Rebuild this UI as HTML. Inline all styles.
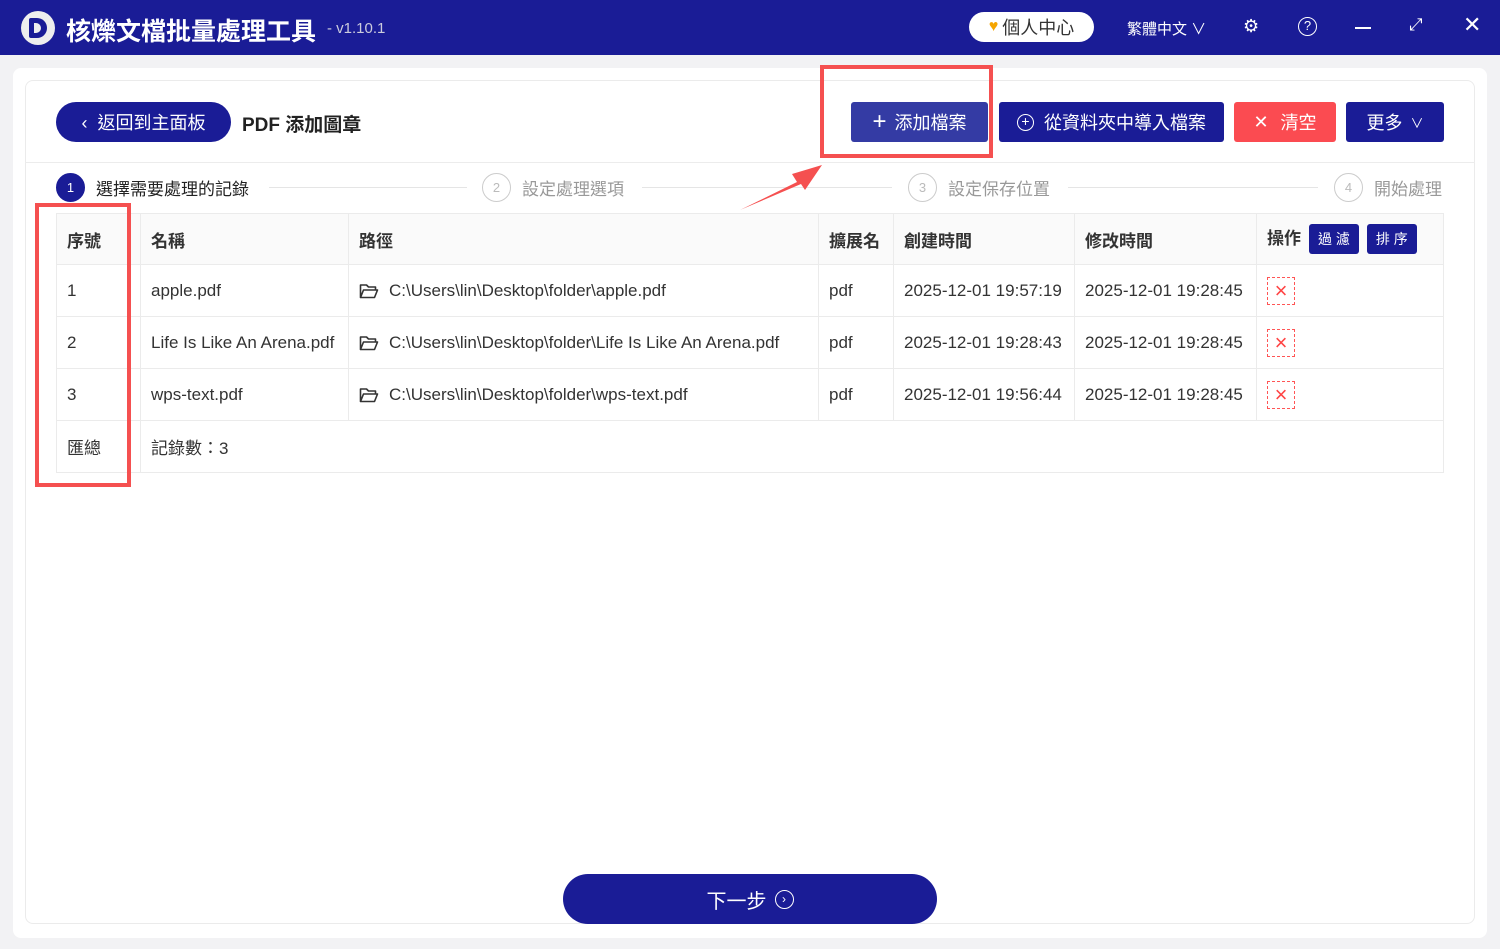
<!DOCTYPE html>
<html><head><meta charset="utf-8"><style>
*{box-sizing:border-box;margin:0;padding:0}
body{width:1500px;height:949px;overflow:hidden;background:#f2f2f4;font-family:"Liberation Sans","Noto Sans CJK TC",sans-serif;position:relative;color:#333}
.title{position:absolute;left:0;top:0;width:1500px;height:55px;background:#1a1c96;color:#fff}
.abs{position:absolute}
.card{position:absolute;left:25px;top:80px;width:1450px;height:844px;background:#fff;border:1px solid #ebebeb;border-radius:8px}
.btn{position:absolute;top:102px;height:40px;color:#fff;font-size:18px;display:flex;align-items:center;justify-content:center;border-radius:3px}
table{position:absolute;left:56px;top:213px;width:1388px;border-collapse:collapse;font-size:17px}
td{border:1px solid #ebebeb;padding:0 10px;height:52px;color:#333;vertical-align:middle}
tr.h td{background:#fafafa;font-weight:bold;height:51px}
.x{display:inline-block;width:28px;height:28px;border:1px dashed #f55;color:#f44;text-align:center;line-height:26px;font-size:22px;vertical-align:middle}
.step{position:absolute;top:173px;font-size:17px;color:#999;display:flex;align-items:center}
.c{width:29px;height:29px;border-radius:50%;border:1px solid #ccc;display:flex;align-items:center;justify-content:center;font-size:13px;margin-right:11px;color:#bbb}
.line{position:absolute;top:187px;height:1px;background:#e5e5e5}
.sm{display:inline-block;background:#1a1c96;color:#fff;font-size:14px;padding:0 9px;height:30px;line-height:30px;border-radius:3px;margin-left:8px;font-weight:normal;vertical-align:middle}
.f{vertical-align:-3px;margin-right:10px}
</style></head><body>
<div class="title">
 <div class="abs" style="left:21px;top:11px;width:34px;height:34px;border-radius:50%;background:#eee;display:flex;align-items:center;justify-content:center"><div style="width:18px;height:20px;background:#1a1c96;border-radius:2px 10px 10px 2px;position:relative"><div style="position:absolute;left:5px;top:5px;width:7px;height:10px;background:#eee;border-radius:0 5px 5px 0"></div></div></div>
 <div class="abs" style="left:66px;top:12px;font-size:25px;font-weight:bold">核爍文檔批量處理工具</div>
 <div class="abs" style="left:327px;top:20px;font-size:15px;color:#ccd">- v1.10.1</div>
 <div class="abs" style="left:969px;top:12px;width:125px;height:30px;background:#fff;border-radius:15px;color:#333;font-size:18px;display:flex;align-items:center;justify-content:center"><span style="color:#f5a500;margin-right:4px;font-size:16px">♥</span>個人中心</div>
 <div class="abs" style="left:1127px;top:18px;font-size:15px">繁體中文 ∨</div>
 <div class="abs" style="left:1243px;top:16px;font-size:18px">⚙</div>
 <div class="abs" style="left:1298px;top:17px;width:19px;height:19px;border:1.5px solid #fff;border-radius:50%;font-size:13px;text-align:center;line-height:16px">?</div>
 <div class="abs" style="left:1355px;top:27px;width:16px;height:2px;background:#fff"></div>
 <div class="abs" style="left:1409px;top:15px;font-size:17px">⤢</div>
 <div class="abs" style="left:1463px;top:12px;font-size:22px">✕</div>
</div>
<div class="abs" style="left:13px;top:68px;width:1474px;height:870px;background:#fff;border-radius:8px"></div>
<div class="card"></div>
<div class="abs" style="left:56px;top:102px;width:175px;height:40px;background:#1a1c96;border-radius:20px;color:#fff;font-size:18px;display:flex;align-items:center;justify-content:center">‹&nbsp;&nbsp;返回到主面板</div>
<div class="abs" style="left:242px;top:110px;font-size:19px;font-weight:bold;color:#222">PDF 添加圖章</div>
<div class="btn" style="left:851px;width:137px;background:#343ba4"><span style="font-size:24px;margin-right:8px">+</span>添加檔案</div>
<div class="btn" style="left:999px;width:225px;background:#1a1c96"><span style="display:inline-block;width:17px;height:17px;border:1.5px solid #fff;border-radius:50%;font-size:14px;line-height:13px;text-align:center;margin-right:10px">+</span>從資料夾中導入檔案</div>
<div class="btn" style="left:1234px;width:102px;background:#fb4b51"><span style="margin-right:12px">✕</span>清空</div>
<div class="btn" style="left:1346px;width:98px;background:#1a1c96">更多 <span style="font-size:13px;margin-left:8px">∨</span></div>
<div class="abs" style="left:25px;top:162px;width:1450px;height:1px;background:#ececec"></div>
<div class="step" style="left:56px;color:#222"><div class="c" style="background:#1a1c96;border-color:#1a1c96;color:#fff">1</div>選擇需要處理的記錄</div>
<div class="line" style="left:269px;width:198px"></div>
<div class="step" style="left:482px"><div class="c">2</div>設定處理選項</div>
<div class="line" style="left:642px;width:250px"></div>
<div class="step" style="left:908px"><div class="c">3</div>設定保存位置</div>
<div class="line" style="left:1068px;width:250px"></div>
<div class="step" style="left:1334px"><div class="c">4</div>開始處理</div>
<table>
<colgroup><col style="width:84px"><col style="width:208px"><col style="width:470px"><col style="width:75px"><col style="width:181px"><col style="width:182px"><col></colgroup>
<tr class="h"><td>序號</td><td>名稱</td><td>路徑</td><td>擴展名</td><td>創建時間</td><td>修改時間</td><td>操作<span class="sm">過 濾</span><span class="sm">排 序</span></td></tr>
<tr><td>1</td><td>apple.pdf</td><td><svg class="f" width="20" height="16" viewBox="0 0 20 16"><path d="M1.5 14.5V2h6l2 2h7v3M1.5 14.5h14l3-7.5H4.5z" fill="none" stroke="#333" stroke-width="1.6" stroke-linejoin="round"/></svg>C:\Users\lin\Desktop\folder\apple.pdf</td><td>pdf</td><td>2025-12-01 19:57:19</td><td>2025-12-01 19:28:45</td><td><span class="x">×</span></td></tr>
<tr><td>2</td><td>Life Is Like An Arena.pdf</td><td><svg class="f" width="20" height="16" viewBox="0 0 20 16"><path d="M1.5 14.5V2h6l2 2h7v3M1.5 14.5h14l3-7.5H4.5z" fill="none" stroke="#333" stroke-width="1.6" stroke-linejoin="round"/></svg>C:\Users\lin\Desktop\folder\Life Is Like An Arena.pdf</td><td>pdf</td><td>2025-12-01 19:28:43</td><td>2025-12-01 19:28:45</td><td><span class="x">×</span></td></tr>
<tr><td>3</td><td>wps-text.pdf</td><td><svg class="f" width="20" height="16" viewBox="0 0 20 16"><path d="M1.5 14.5V2h6l2 2h7v3M1.5 14.5h14l3-7.5H4.5z" fill="none" stroke="#333" stroke-width="1.6" stroke-linejoin="round"/></svg>C:\Users\lin\Desktop\folder\wps-text.pdf</td><td>pdf</td><td>2025-12-01 19:56:44</td><td>2025-12-01 19:28:45</td><td><span class="x">×</span></td></tr>
<tr><td style="height:47px">匯總</td><td colspan="6">記錄數：3</td></tr>
</table>
<div class="abs" style="left:35px;top:203px;width:96px;height:284px;border:4px solid #f55050"></div>
<div class="abs" style="left:820px;top:65px;width:173px;height:93px;border:4px solid #f55050"></div>
<svg class="abs" style="left:735px;top:160px" width="95" height="55"><path d="M5 50 L62 22 L57 14 L87 5 L70 30 L66 24 Z" fill="#f55050"/></svg>
<div class="abs" style="left:563px;top:874px;width:374px;height:50px;background:#1a1c96;border-radius:25px;color:#fff;font-size:20px;display:flex;align-items:center;justify-content:center">下一步 <span style="display:inline-block;width:19px;height:19px;border:1.5px solid #fff;border-radius:50%;font-size:12px;line-height:16px;text-align:center;margin-left:8px">›</span></div>
</body></html>
